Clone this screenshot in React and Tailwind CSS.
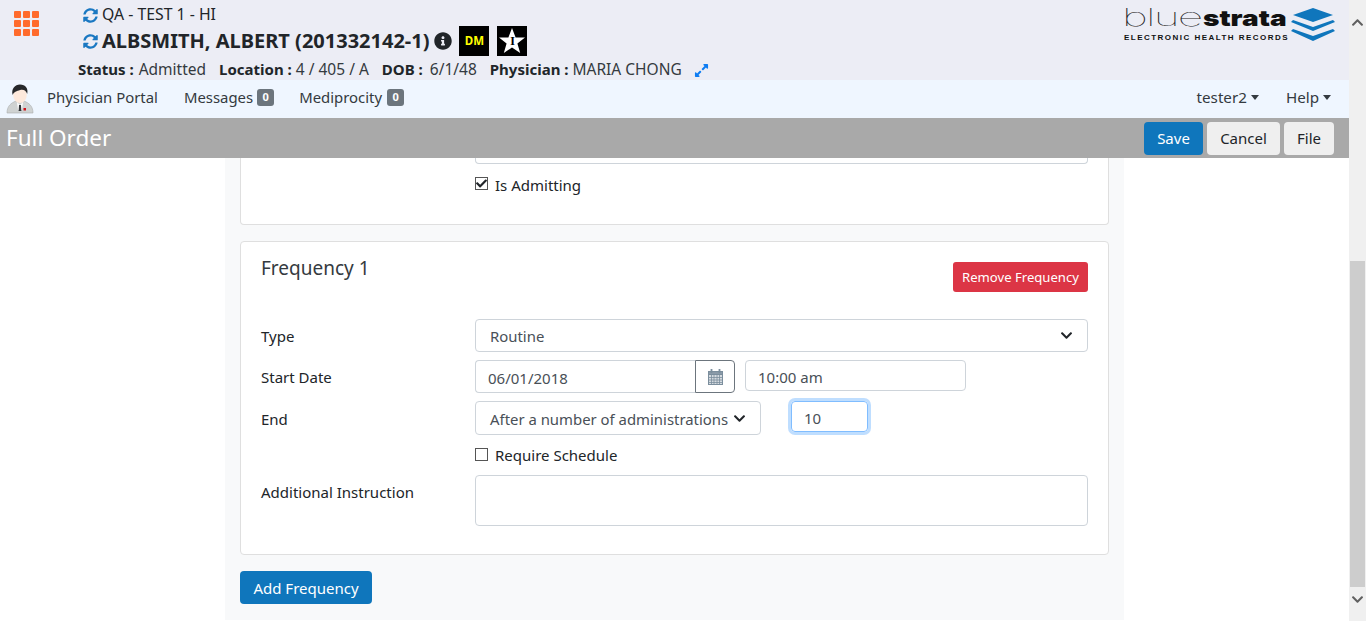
import { FaSyncAlt, FaInfoCircle, FaExpandAlt, FaCheck, FaChevronUp, FaChevronDown } from "react-icons/fa";

const font = { fontFamily: "'Noto Sans', 'Open Sans', sans-serif" };

function AppGrid() {
  const cells = [0, 1, 2, 3, 4, 5, 6, 7, 8];
  return (
    <div className="grid grid-cols-[7px_7px_7px] gap-[2px] w-[25px]">
      {cells.map((c) => (
        <div key={c} className="w-[7px] h-[7px] rounded-[1px] bg-[#ff6b2c]" />
      ))}
    </div>
  );
}

function Doctor() {
  return (
    <svg width="28" height="30" viewBox="0 0 28 30">
      <path d="M1 29c0-7 4-10 9-12h8c5 2 9 5 9 12z" fill="#cfd2d2" stroke="#a9adad" strokeWidth="0.6" />
      <path d="M11 18l3 3 3-3-1 8h-4z" fill="#fff" />
      <path d="M13 21h2l.4 6h-2.8z" fill="#33363a" />
      <rect x="17.5" y="24" width="2.5" height="2.5" fill="#d0121b" />
      <ellipse cx="14" cy="11" rx="6.8" ry="8" fill="#fde9dc" />
      <path d="M6.6 11C5 5 9 .5 14 .5c5.500 0 8.500 4 7.200 9.500-1-3-3-4.500-6-4.200-3 1-6.500 1.200-8.600 5.200z" fill="#26282b" />
    </svg>
  );
}

function CalendarIcon() {
  return (
    <svg width="15" height="16" viewBox="0 0 15 16" fill="none" stroke="#7b8e9d">
      <rect x="0.500" y="2.500" width="14" height="13" fill="#d5dbe0" />
      <rect x="0.500" y="2.500" width="14" height="3" fill="#8a9aa8" />
      <path d="M0 8.500h15M0 11h15M0 13.500h15M3.500 5v10M6 5v10M9 5v10M11.500 5v10" strokeWidth="0.800" />
      <path d="M3.500 0v4M11.500 0v4" strokeWidth="1.800" />
    </svg>
  );
}

function Logo() {
  return (
    <div className="flex items-start">
      <div className="flex flex-col items-start w-[166px]">
        <div className="flex items-baseline h-[24px] mt-[2px] leading-[24px] whitespace-nowrap" style={{ fontFamily: "'Inter', sans-serif" }}>
          <span className="inline-block w-[79px] ml-[-2px] origin-left scale-x-[1.85] tracking-[-1px] text-[24px] text-[#222]" style={{ fontWeight: 100 }}>blue</span>
          <span className="inline-block w-[84px] ml-[2px] origin-left scale-x-[1.27] text-[22px] text-[#111]" style={{ fontWeight: 900 }}>strata</span>
        </div>
        <div className="mt-[3px] text-[8px] leading-[9px] font-bold tracking-[1.47px] text-[#111] whitespace-nowrap" style={{ fontFamily: "'Liberation Sans', sans-serif" }}>ELECTRONIC HEALTH RECORDS</div>
      </div>
      <svg width="45" height="33" viewBox="0 0 45 33" className="mt-[4px]">
        <path d="M23 0l20 7-20 7-20-7z" fill="#0f76bc" />
        <path d="M3 12l20 7 20-7 2 2-22 9-22-9z" fill="#0f76bc" />
        <path d="M3 21l20 7 20-7 2 2-22 10-22-10z" fill="#0f76bc" />
      </svg>
    </div>
  );
}

function StarBadge() {
  return (
    <div className="relative w-[30px] h-[30px] bg-black flex items-center justify-center">
      <svg width="28" height="28" viewBox="0 0 28 28" className="absolute left-[1px] top-[1px]">
        <path d="M14 1l3.600 9.400H27l-7.600 6 2.800 9.600L14 20.400 5.800 26l2.800-9.600-7.600-6h9.400z" fill="#fff" />
      </svg>
      <span className="relative text-[12px] leading-none font-bold text-black" style={{ fontFamily: "'Liberation Serif', serif" }}>I</span>
    </div>
  );
}

function Label({ children, className }) {
  return <div className={`w-[214px] shrink-0 text-[15px] text-[#212529] ${className || ""}`}>{children}</div>;
}

function SelectBox({ value, className }) {
  return (
    <div className={`flex items-center justify-between border border-[#ced4da] rounded-[4px] bg-white pl-[14px] text-[14.9px] text-[#495057] ${className}`}>
      <span className="whitespace-nowrap pt-[2px]">{value}</span>
      <FaChevronDown className="w-[13px] h-[13px] text-[#212529]" />
    </div>
  );
}

function Caret() {
  return <span className="w-0 h-0 border-x-[4.500px] border-x-transparent border-t-[5px] border-t-[#343a40]" />;
}

export default function App() {
  return (
    <div className="flex h-[621px] w-[1366px] overflow-hidden bg-white" style={font}>
      <div className="w-[1349px] flex flex-col">
        {/* Patient header */}
        <header className="h-[80px] bg-[#ecedf5] flex">
          <div className="w-[78px] shrink-0 pl-[14px] pt-[11px]">
            <AppGrid />
          </div>
          <div className="flex-1">
            <div className="flex items-center gap-[4px] pl-[5px] pt-[5px] h-[25px] text-[15.8px] text-[#212529]">
              <FaSyncAlt className="w-[15px] h-[15px] text-[#1a78c2]" />
              <span>QA - TEST 1 - HI</span>
            </div>
            <div className="flex items-center pl-[5px] h-[30px] mt-[1px]">
              <FaSyncAlt className="w-[15px] h-[15px] text-[#1a78c2]" />
              <span className="ml-[4px] text-[20px] font-bold text-[#212529] whitespace-nowrap">ALBSMITH, ALBERT (201332142-1)</span>
              <FaInfoCircle className="ml-[5px] w-[18px] h-[18px] text-[#212529]" />
              <div className="ml-[7px] w-[30px] h-[30px] bg-black flex items-center justify-center text-[11.500px] font-bold text-[#ffff00]">DM</div>
              <div className="ml-[8px]"><StarBadge /></div>
            </div>
            <div className="flex items-baseline h-[26px] pt-[2px] text-[15.500px] text-[#343a40] whitespace-nowrap">
              <b className="text-[15px] text-[#212529]">Status :</b>
              <span className="ml-[5px]">Admitted</span>
              <b className="ml-[13px] text-[15px] text-[#212529]">Location :</b>
              <span className="ml-[4px]">4 / 405 / A</span>
              <b className="ml-[13px] text-[15px] text-[#212529]">DOB :</b>
              <span className="ml-[7px]">6/1/48</span>
              <b className="ml-[13px] text-[15px] text-[#212529]">Physician :</b>
              <span className="ml-[4px]">MARIA CHONG</span>
              <FaExpandAlt className="ml-[12px] w-[15px] h-[15px] self-center text-[#0d7cf2]" />
            </div>
          </div>
          <div className="pr-[14px] pt-[4px]">
            <Logo />
          </div>
        </header>

        {/* Nav */}
        <nav className="h-[38px] bg-[#eff6ff] flex items-center text-[14.900px] text-[#343a40]">
          <div className="w-[35px] pl-[6px] shrink-0"><Doctor /></div>
          <div className="h-[32px] flex items-center pl-[12px] pr-[13px] mt-[-3px]">Physician Portal</div>
          <div className="h-[32px] flex items-center pl-[13px] pr-[13px] gap-[4px] mt-[-3px]">
            Messages
            <span className="bg-[#6c757d] text-white text-[11px] font-bold rounded-[3px] w-[17px] h-[17px] flex items-center justify-center">0</span>
          </div>
          <div className="h-[32px] flex items-center pl-[12px] gap-[5px] mt-[-3px]">
            Mediprocity
            <span className="bg-[#6c757d] text-white text-[11px] font-bold rounded-[3px] w-[17px] h-[17px] flex items-center justify-center">0</span>
          </div>
          <div className="flex-1" />
          <div className="flex items-center gap-[4px] mr-[27px] mt-[-3px] text-[15.200px]">
            tester2
            <Caret />
          </div>
          <div className="flex items-center gap-[4px] mr-[18px] mt-[-3px] text-[15.200px]">
            Help
            <Caret />
          </div>
        </nav>

        {/* Title bar */}
        <div className="h-[40px] bg-[#a9a9a9] flex items-center pl-[6px] pr-[15px]">
          <h1 className="text-[22.5px] text-white">Full Order</h1>
          <div className="flex-1" />
          <div className="flex gap-[4px] text-[15px]">
            <button className="h-[33px] w-[59px] rounded-[4px] bg-[#0f76bc] text-white">Save</button>
            <button className="h-[33px] w-[73px] rounded-[4px] bg-[#efefef] text-[#212529]">Cancel</button>
            <button className="h-[33px] w-[50px] rounded-[4px] bg-[#efefef] text-[#212529]">File</button>
          </div>
        </div>

        {/* Content */}
        <main className="ml-[225px] w-[899px] h-[462px] bg-[#f8f9fa] px-[15px]">
          <section className="w-[869px] h-[67px] bg-white border border-t-0 border-[#dfdfdf] rounded-b-[4px]">
            <div className="ml-[234px] w-[613px] h-[6px] border border-t-0 border-[#ced4da] rounded-b-[4px]" />
            <label className="ml-[234px] mt-[11px] flex items-center gap-[7px] text-[15px] text-[#212529] h-[20px]">
              <span className="relative w-[13px] h-[13px] border border-[#555] bg-white flex items-center justify-center mt-[-3px]">
                <FaCheck className="w-[11px] h-[11px] text-[#212529]" />
              </span>
              Is Admitting
            </label>
          </section>

          <section className="w-[869px] h-[314px] mt-[16px] bg-white border border-[#dfdfdf] rounded-[4px] pl-[20px] pr-[20px] pt-[20px]">
            <div className="flex justify-between items-start h-[57px]">
              <h2 className="text-[19px] leading-[12px] text-[#343a40]">Frequency 1</h2>
              <button className="w-[135px] h-[30px] rounded-[3px] bg-[#dc3545] text-white text-[13.100px] pt-[2px]">Remove Frequency</button>
            </div>

            <div className="flex items-center h-[33px]">
              <Label className="pt-[1px]">Type</Label>
              <SelectBox value="Routine" className="w-[613px] h-[33px] pr-[14px]" />
            </div>

            <div className="flex items-start h-[33px] mt-[8px]">
              <Label className="leading-[35px]">Start Date</Label>
              <div className="w-[220px] h-[33px] border border-[#ced4da] border-r-0 rounded-l-[4px] pl-[12px] pt-[3px] flex items-center text-[15px] text-[#495057]">06/01/2018</div>
              <div className="w-[40px] h-[33px] border border-[#6c757d] rounded-r-[4px] flex items-center justify-center">
                <CalendarIcon />
              </div>
              <div className="ml-[10px] w-[221px] h-[31px] border border-[#ced4da] rounded-[4px] pl-[12px] pt-[4px] flex items-center text-[15px] text-[#495057]">10:00 am</div>
            </div>

            <div className="flex items-start h-[34px] mt-[8px]">
              <Label className="leading-[36px]">End</Label>
              <SelectBox value="After a number of administrations" className="w-[286px] h-[34px] pr-[14px]" />
              <div className="ml-[30px] w-[77px] h-[31px] border border-[#80bdff] rounded-[4px] shadow-[0_0_0_3px_rgba(0,123,255,0.25)] pl-[12px] pt-[4px] flex items-center text-[15px] text-[#495057]">10</div>
            </div>

            <label className="ml-[214px] mt-[9px] flex items-center gap-[7px] h-[22px] text-[15px] text-[#212529]">
              <span className="w-[13px] h-[13px] border border-[#555] bg-white mt-[-1px]" />
              Require Schedule
            </label>

            <div className="flex items-start mt-[9px]">
              <Label className="leading-[34px]">Additional Instruction</Label>
              <div className="w-[613px] h-[51px] border border-[#ced4da] rounded-[4px] bg-white" />
            </div>
          </section>

          <button className="mt-[16px] w-[132px] h-[33px] rounded-[4px] bg-[#0f76bc] text-white text-[15px] pt-[2px]">Add Frequency</button>
        </main>
      </div>

      {/* Scrollbar */}
      <div className="w-[17px] h-[621px] bg-[#f0f0f0] flex flex-col items-center">
        <div className="h-[261px] w-full flex justify-center pt-[16px]">
          <FaChevronUp className="w-[13px] h-[13px] text-[#606060]" />
        </div>
        <div className="w-[15px] h-[326px] bg-[#cdcdcd]" />
        <div className="pt-[6px]">
          <FaChevronDown className="w-[13px] h-[13px] text-[#606060]" />
        </div>
      </div>
    </div>
  );
}
